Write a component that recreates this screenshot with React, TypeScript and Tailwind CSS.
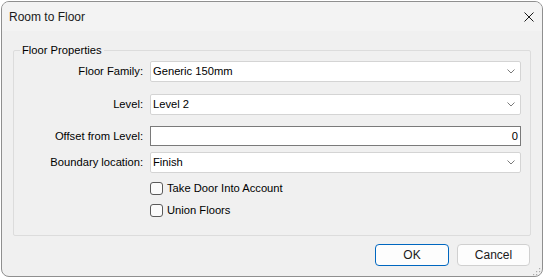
import React from "react";

const Chevron = () => (
  <svg width="8" height="5" viewBox="0 0 8 5" className="shrink-0">
    <path d="M0.5 0.5 L4 4 L7.5 0.5" fill="none" stroke="#7a7a7a" strokeWidth="1" />
  </svg>
);

const Combo = ({ value }: { value: string }) => (
  <div className="h-[21px] w-[371px] bg-white border border-[#d4d4d4] rounded-[2px] flex items-center pl-[2px] pr-[5px]">
    <span className="flex-1 leading-[19px]">{value}</span>
    <Chevron />
  </div>
);

const Label = ({ text }: { text: string }) => (
  <div className="w-[129px] text-right">{text}</div>
);

const Check = ({ text }: { text: string }) => (
  <div className="flex items-center h-[17px] ml-[136px]">
    <div className="w-[13px] h-[13px] rounded-[3px] border border-[#5a5a5a] bg-[#fbfbfb]" />
    <span className="ml-[4px]">{text}</span>
  </div>
);

export default function App() {
  return (
    <div
      className="w-[544px] h-[278px] bg-white text-[11.2px] text-black"
      style={{ fontFamily: '"Liberation Sans", Arial, sans-serif' }}
    >
      <div className="ml-[1px] pt-[1px]">
        <div className="w-[542px] h-[276px] border border-[#8f8f8f] rounded-[8px] overflow-hidden flex flex-col bg-[#f0f0f0]">
          {/* Title bar */}
          <div className="h-[29px] bg-[#f3f3f3] flex items-center pl-[7px] pr-[8px]">
            <span className="text-[12px] text-[#1a1a1a] flex-1 mt-[1px]">Room to Floor</span>
            <svg width="10" height="10" viewBox="0 0 10 10" className="mt-[1px]">
              <path d="M0.5 0.5 L9.5 9.5 M9.5 0.5 L0.5 9.5" stroke="#1a1a1a" strokeWidth="1" />
            </svg>
          </div>
          {/* Client */}
          <div className="flex-1 flex flex-col">
            <fieldset className="ml-[11px] mt-[13px] w-[518px] h-[192px] border border-[#dcdcdc] rounded-[2px] px-0 pt-[4px]">
              <legend className="ml-[6px] px-[2px] leading-[13px]">Floor Properties</legend>
              <div className="flex flex-col">
                <div className="flex items-center gap-[7px]">
                  <Label text="Floor Family:" />
                  <Combo value="Generic 150mm" />
                </div>
                <div className="flex items-center gap-[7px] mt-[12px]">
                  <Label text="Level:" />
                  <Combo value="Level 2" />
                </div>
                <div className="flex items-center gap-[7px] mt-[11px]">
                  <Label text="Offset from Level:" />
                  <div className="h-[20px] w-[371px] bg-white border border-[#7a7a7a] flex items-center justify-end pr-[2px]">
                    0
                  </div>
                </div>
                <div className="flex items-center gap-[7px] mt-[6px]">
                  <Label text="Boundary location:" />
                  <Combo value="Finish" />
                </div>
                <div className="mt-[7px]">
                  <Check text="Take Door Into Account" />
                </div>
                <div className="mt-[5px]">
                  <Check text="Union Floors" />
                </div>
              </div>
            </fieldset>
            <div className="flex justify-end gap-[8px] mr-[12px] mt-[8px]">
              <button className="w-[74px] h-[22px] rounded-[4px] border border-[#0067c0] bg-[#fdfdfd] text-[12px] text-[#1a1a1a]">
                OK
              </button>
              <button className="w-[73px] h-[22px] rounded-[4px] border border-[#d0d0d0] bg-[#fdfdfd] text-[12px] text-[#1a1a1a]">
                Cancel
              </button>
            </div>
            <div className="flex justify-end mt-[2px] mr-[1px]">
              <svg width="8" height="8" viewBox="0 0 8 8">
                <rect x="6" y="0" width="1.2" height="1.2" fill="#aaa" />
                <rect x="3" y="3" width="1.2" height="1.2" fill="#aaa" />
                <rect x="6" y="3" width="1.2" height="1.2" fill="#aaa" />
                <rect x="0" y="6" width="1.2" height="1.2" fill="#aaa" />
                <rect x="3" y="6" width="1.2" height="1.2" fill="#aaa" />
                <rect x="6" y="6" width="1.2" height="1.2" fill="#aaa" />
              </svg>
            </div>
          </div>
        </div>
      </div>
    </div>
  );
}
